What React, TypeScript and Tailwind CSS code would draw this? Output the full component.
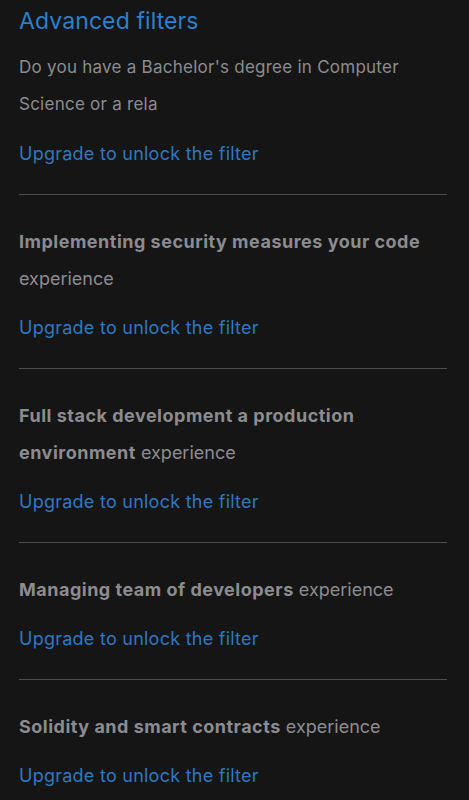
const filters: { bold: string; rest: string }[] = [
  { bold: 'Implementing security measures your code', rest: 'experience' },
  { bold: 'Full stack development a production environment', rest: 'experience' },
  { bold: 'Managing team of developers', rest: 'experience' },
  { bold: 'Solidity and smart contracts', rest: 'experience' },
];

function UpgradeLink() {
  return (
    <a href="#" className="block text-[18px] leading-[37px] tracking-[0.25px] text-[#2f78c0] mt-3">
      Upgrade to unlock the filter
    </a>
  );
}

export default function App() {
  return (
    <div
      className="min-h-screen bg-[#151515] pl-[19px] pr-[22px] overflow-hidden"
      style={{ fontFamily: 'Inter, "Noto Sans", sans-serif' }}
    >
      <h1 className="text-[23px] leading-[42px] tracking-[0.1px] text-[#2f7fcb] font-normal">Advanced filters</h1>

      <div className="pt-[7px] pb-[22px] border-b border-[#4d4d4f]">
        <p className="text-[17px] leading-[37px] text-[#8c8c90] tracking-[0.25px]">
          Do you have a Bachelor's degree in Computer Science or a rela
        </p>
        <UpgradeLink />
      </div>

      {filters.map((f, i) => (
        <div
          key={f.bold}
          className={
            i < filters.length - 1
              ? 'pt-[28px] pb-[22px] border-b border-[#4d4d4f]'
              : 'pt-[28px] pb-[22px]'
          }
        >
          <p className="text-[18px] leading-[37px] text-[#8c8c90]">
            <span className="font-bold tracking-[0.5px]">{f.bold}</span> {f.rest}
          </p>
          <UpgradeLink />
        </div>
      ))}
    </div>
  );
}
